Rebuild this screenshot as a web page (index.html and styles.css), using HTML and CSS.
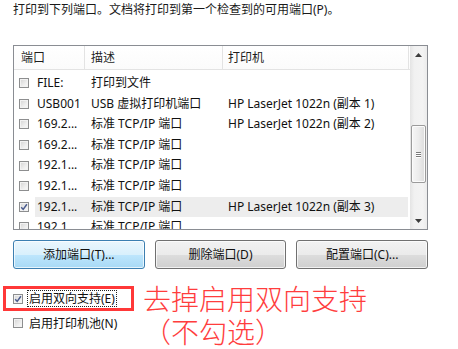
FILE: index.html
```html
<!DOCTYPE html>
<html>
<head>
<meta charset="utf-8">
<link rel="stylesheet" href="styles.css">
</head>
<body>
<div class="dlg">
  <p class="intro">打印到下列端口。文档将打印到第一个检查到的可用端口(P)。</p>
  <div class="list">
    <div class="view">
      <div class="head">
        <div class="hc c1">端口</div>
        <div class="hc c2">描述</div>
        <div class="hc c3">打印机</div>
      </div>
      <div class="rows">
        <div class="row"><span class="cbx"><span class="cb"></span></span><span class="t t1">FILE:</span><span class="t t2">打印到文件</span><span class="t t3"></span></div>
        <div class="row"><span class="cbx"><span class="cb"></span></span><span class="t t1">USB001</span><span class="t t2">USB 虚拟打印机端口</span><span class="t t3">HP LaserJet 1022n (副本 1)</span></div>
        <div class="row"><span class="cbx"><span class="cb"></span></span><span class="t t1">169.2...</span><span class="t t2">标准 TCP/IP 端口</span><span class="t t3">HP LaserJet 1022n (副本 2)</span></div>
        <div class="row"><span class="cbx"><span class="cb"></span></span><span class="t t1">169.2...</span><span class="t t2">标准 TCP/IP 端口</span><span class="t t3"></span></div>
        <div class="row"><span class="cbx"><span class="cb"></span></span><span class="t t1">192.1...</span><span class="t t2">标准 TCP/IP 端口</span><span class="t t3"></span></div>
        <div class="row"><span class="cbx"><span class="cb"></span></span><span class="t t1">192.1...</span><span class="t t2">标准 TCP/IP 端口</span><span class="t t3"></span></div>
        <div class="row sel"><span class="cbx"><span class="cb on"><svg viewBox="0 0 8 8" width="8" height="8"><path d="M1.2 4.2 L3.2 6.4 L6.9 1.2" fill="none" stroke="#4b5c8e" stroke-width="1.5"/></svg></span></span><span class="t t1">192.1...</span><span class="t t2">标准 TCP/IP 端口</span><span class="t t3">HP LaserJet 1022n (副本 3)</span></div>
        <div class="row"><span class="cbx"><span class="cb"></span></span><span class="t t1">192.1...</span><span class="t t2">标准 TCP/IP 端口</span><span class="t t3"></span></div>
      </div>
    </div>
    <div class="sb">
      <div class="sb-btn"><svg viewBox="0 0 7 4" width="7" height="4"><path d="M0 4 L3.5 0 L7 4 Z" fill="#3c3c3c"/></svg></div>
      <div class="sb-track">
        <div class="thumb"><span class="grip"></span><span class="grip"></span><span class="grip"></span></div>
      </div>
      <div class="sb-btn"><svg viewBox="0 0 7 4" width="7" height="4"><path d="M0 0 L7 0 L3.5 4 Z" fill="#3c3c3c"/></svg></div>
    </div>
  </div>
  <div class="btns">
    <div class="btn def">添加端口(T)...</div>
    <div class="btn">删除端口(D)</div>
    <div class="btn">配置端口(C)...</div>
  </div>
  <div class="bottom">
    <div class="opts">
      <div class="redbox">
        <div class="opt"><span class="cb on"><svg viewBox="0 0 8 8" width="8" height="8"><path d="M1.2 4.2 L3.2 6.4 L6.9 1.2" fill="none" stroke="#4b5c8e" stroke-width="1.5"/></svg></span><span class="lbl focus">启用双向支持(E)</span></div>
      </div>
      <div class="opt opt2"><span class="cb"></span><span class="lbl">启用打印机池(N)</span></div>
    </div>
    <div class="note">
      <div class="nl">去掉启用双向支持</div>
      <div class="nl">（不勾选）</div>
    </div>
  </div>
</div>
</body>
</html>
```

FILE: styles.css
```css
html, body {
  margin: 0;
  padding: 0;
  background: #fff;
}
body {
  width: 458px;
  height: 349px;
  overflow: hidden;
  font-family: "Noto Sans", "Noto Sans CJK SC", sans-serif;
  font-size: 12px;
  color: #000;
}
.intro {
  margin: 0;
  padding-left: 13px;
  height: 45px;
  line-height: 20px;
  color: #1a1a1a;
  white-space: nowrap;
}
.list {
  margin-left: 13px;
  width: 415px;
  height: 185px;
  box-sizing: border-box;
  border: 1px solid #8a8d93;
  display: flex;
  overflow: hidden;
}
.view {
  width: 396px;
  overflow: hidden;
}
.head {
  display: flex;
  height: 23px;
  border-bottom: 1px solid #e3e3e3;
  background: linear-gradient(#ffffff, #fbfbfb);
}
.hc {
  box-sizing: border-box;
  border-right: 1px solid #e3e3e3;
  line-height: 23px;
  color: #1e1e1e;
}
.c1 { width: 71px; padding-left: 7px; }
.c2 { width: 138px; padding-left: 6px; }
.c3 { width: 186px; padding-left: 5px; }
.rows {
  padding-top: 3px;
}
.row {
  display: flex;
  height: 20.6px;
  line-height: 20.6px;
  white-space: nowrap;
  color: #111;
}
.cbx {
  width: 21px;
  display: flex;
  align-items: center;
  padding-left: 5px;
  box-sizing: border-box;
}
.t { box-sizing: border-box; overflow: hidden; }
.t1 { width: 50px; padding-left: 2px; }
.t2 { width: 138px; padding-left: 6px; }
.t3 { width: 185px; padding-left: 5px; }
.row.sel .t { background: #ededed; }
.cb {
  width: 10px;
  height: 10px;
  box-sizing: border-box;
  border: 1px solid #8d8e8f;
  background: linear-gradient(135deg, #d3d3d3, #eeeeee 60%, #fafafa);
  box-shadow: inset 0 0 0 1px #f2f2f2;
  display: flex;
  align-items: center;
  justify-content: center;
  flex: none;
}
.cb svg { display: block; }
.sb {
  width: 17px;
  display: flex;
  flex-direction: column;
  background: linear-gradient(to right, #e4e4e4, #f1f1f1 25%, #f3f3f3 75%, #ebebeb);
}
.sb-btn {
  height: 17px;
  display: flex;
  align-items: center;
  justify-content: center;
  flex: none;
}
.sb-track {
  flex: 1;
  padding-top: 62px;
}
.thumb {
  margin: 0 1px;
  height: 58px;
  box-sizing: border-box;
  border: 1px solid #9b9b9b;
  border-radius: 2px;
  background: linear-gradient(to right, #f6f6f6, #ececec 50%, #dcdcdc);
  box-shadow: inset 0 0 0 1px #fbfbfb;
  display: flex;
  flex-direction: column;
  align-items: center;
  justify-content: center;
  gap: 1px;
}
.grip {
  width: 5px;
  height: 1px;
  background: #7a7a7a;
  box-shadow: 0 1px 0 #fff;
}
.btns {
  display: flex;
  gap: 10px;
  margin: 10px 0 0 13px;
  width: 415px;
}
.btn {
  flex: 1;
  height: 29px;
  box-sizing: border-box;
  border: 1px solid #707070;
  border-radius: 3px;
  background: linear-gradient(#f2f2f2 0%, #ebebeb 50%, #dddddd 51%, #cfcfcf 100%);
  box-shadow: inset 0 0 0 1px rgba(255,255,255,0.7);
  text-align: center;
  line-height: 27px;
  color: #111;
}
.btn.def {
  border-color: #3c7fb1;
  background: linear-gradient(#eaf6fd 0%, #d9f0fc 50%, #bee6fd 51%, #a7d9f5 100%);
}
.bottom {
  display: flex;
  margin-top: 17px;
}
.opts {
  width: 140px;
  padding-left: 3px;
}
.redbox {
  width: 131px;
  height: 25px;
  box-sizing: border-box;
  border: 3px solid #ff3838;
  display: flex;
  align-items: center;
  padding-left: 7px;
}
.opt {
  display: flex;
  align-items: center;
  white-space: nowrap;
}
.opt .cb { margin-right: 4px; }
.lbl {
  line-height: 15px;
  padding: 0 1px;
  border: 1px dotted transparent;
  color: #111;
}
.focus { border-color: #222; }
.opt2 {
  margin-top: 2px;
  height: 20px;
  padding-left: 10px;
}
.note {
  font-family: "Noto Sans CJK SC", sans-serif;
  font-weight: 300;
  font-size: 28px;
  color: #ff3d3d;
  margin-top: -3px;
  white-space: nowrap;
}
.nl {
  height: 33px;
  line-height: 30px;
  overflow: visible;
}
```
